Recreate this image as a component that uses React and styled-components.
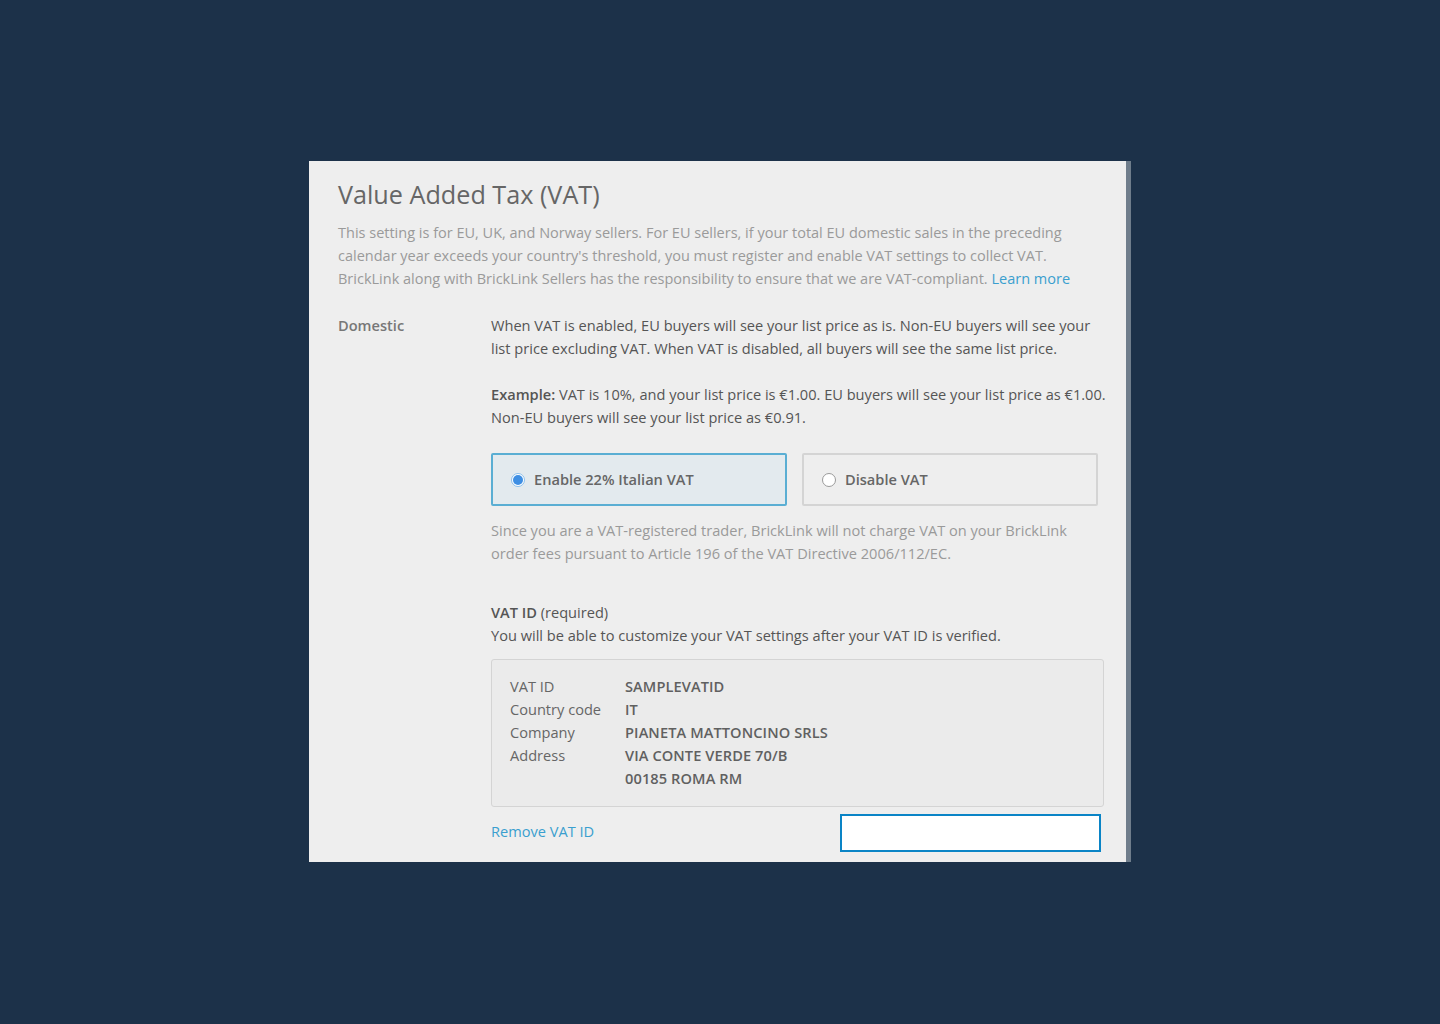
import React from 'react';
import styled, { createGlobalStyle } from 'styled-components';

const GlobalStyle = createGlobalStyle`
  html, body { margin: 0; padding: 0; }
  body {
    background: #1c3149;
    font-family: "Open Sans", Lato, sans-serif;
  }
`;

const Page = styled.div`
  width: 1440px;
  height: 1024px;
  display: flex;
  justify-content: center;
  padding-top: 161px;
  box-sizing: border-box;
`;

const Modal = styled.div`
  width: 822px;
  height: 701px;
  display: flex;
  overflow: hidden;
`;

const Panel = styled.div`
  flex: 1;
  min-width: 0;
  background: #eeeeee;
  padding: 16px 22px 0 29px;
  box-sizing: border-box;
`;

const Scrollbar = styled.div`
  width: 5px;
  flex-shrink: 0;
  background: #6f7d8b;
`;

const Title = styled.h1`
  margin: 0;
  font-size: 25.2px;
  font-weight: 400;
  color: #666666;
  line-height: 34px;
`;

const Intro = styled.p`
  margin: 10px 0 0;
  font-size: 14.5px;
  line-height: 23px;
  color: #9a9a9a;
  white-space: nowrap;
`;

const Link = styled.a`
  color: #3a9fcf;
  text-decoration: none;
  cursor: pointer;
`;

const Section = styled.div`
  display: grid;
  grid-template-columns: 153px 1fr;
  margin-top: 24px;
`;

const Label = styled.div`
  font-size: 14.6px;
  font-weight: 600;
  color: #777777;
  line-height: 23px;
`;

const Body = styled.div`
  font-size: 14.6px;
  line-height: 23px;
  color: #555555;
  white-space: nowrap;
`;

const Para = styled.p`
  margin: ${p => p.$top || 0}px 0 0;
  color: ${p => (p.$muted ? '#9a9a9a' : '#555555')};
`;

const Options = styled.div`
  display: grid;
  grid-template-columns: 296px 296px;
  gap: 15px;
  margin-top: 24px;
`;

const Option = styled.label`
  height: 53px;
  box-sizing: border-box;
  display: flex;
  align-items: center;
  gap: 9px;
  padding-left: 18px;
  border: 2px solid ${p => (p.$active ? '#5aaed3' : '#d4d4d4')};
  border-radius: 2px;
  background: ${p => (p.$active ? '#e3eaee' : '#eeeeee')};
  font-weight: 600;
  color: #666666;
  cursor: pointer;
`;

const Radio = styled.span`
  width: 14px;
  height: 14px;
  border-radius: 50%;
  box-sizing: border-box;
  border: 1px solid ${p => (p.$checked ? '#8cc0ec' : '#9a9a9a')};
  background: #fff;
  display: flex;
  align-items: center;
  justify-content: center;
  &::after {
    content: '';
    width: 10px;
    height: 10px;
    border-radius: 50%;
    background: ${p => (p.$checked ? '#3f8fe3' : 'transparent')};
  }
`;

const Strong = styled.b`
  font-weight: 600;
`;

const InfoBox = styled.div`
  margin-top: 12px;
  border: 1px solid #d4d4d4;
  border-radius: 3px;
  background: #ebebeb;
  padding: 15px 18px 16px;
  display: grid;
  grid-template-columns: 115px 1fr;
  width: 613px;
  box-sizing: border-box;
`;

const Key = styled.div`
  color: #666666;
`;

const Val = styled.div`
  font-weight: 600;
  color: #606060;
  letter-spacing: 0.1px;
`;

const Footer = styled.div`
  display: flex;
  justify-content: space-between;
  align-items: center;
  width: 612px;
  margin-top: 7px;
`;

const RemoveLink = styled(Link)`
  margin-top: -4px;
`;

const SaveButton = styled.button`
  width: 261px;
  height: 38px;
  margin-right: 2px;
  background: #ffffff;
  border: 2px solid #0a84c6;
  border-radius: 0;
`;

export default function App() {
  const rows = [
    ['VAT ID', 'SAMPLEVATID'],
    ['Country code', 'IT'],
    ['Company', 'PIANETA MATTONCINO SRLS'],
    ['Address', 'VIA CONTE VERDE 70/B'],
    ['', '00185 ROMA RM'],
  ];
  return (
    <>
      <GlobalStyle />
      <Page>
        <Modal>
          <Panel>
            <Title>Value Added Tax (VAT)</Title>
            <Intro>
              This setting is for EU, UK, and Norway sellers. For EU sellers, if your total EU domestic sales in the preceding
              <br />
              calendar year exceeds your country's threshold, you must register and enable VAT settings to collect VAT.
              <br />
              BrickLink along with BrickLink Sellers has the responsibility to ensure that we are VAT-compliant.{' '}
              <Link>Learn more</Link>
            </Intro>
            <Section>
              <Label>Domestic</Label>
              <Body>
                <Para>
                  When VAT is enabled, EU buyers will see your list price as is. Non-EU buyers will see your
                  <br />
                  list price excluding VAT. When VAT is disabled, all buyers will see the same list price.
                </Para>
                <Para $top={23}>
                  <Strong>Example:</Strong> VAT is 10%, and your list price is €1.00. EU buyers will see your list price as €1.00.
                  <br />
                  Non-EU buyers will see your list price as €0.91.
                </Para>
                <Options>
                  <Option $active>
                    <Radio $checked />
                    Enable 22% Italian VAT
                  </Option>
                  <Option>
                    <Radio />
                    Disable VAT
                  </Option>
                </Options>
                <Para $top={13} $muted>
                  Since you are a VAT-registered trader, BrickLink will not charge VAT on your BrickLink
                  <br />
                  order fees pursuant to Article 196 of the VAT Directive 2006/112/EC.
                </Para>
                <Para $top={36}>
                  <Strong>VAT ID</Strong> (required)
                  <br />
                  You will be able to customize your VAT settings after your VAT ID is verified.
                </Para>
                <InfoBox>
                  {rows.map(([k, v], i) => (
                    <React.Fragment key={i}>
                      <Key>{k}</Key>
                      <Val>{v}</Val>
                    </React.Fragment>
                  ))}
                </InfoBox>
                <Footer>
                  <RemoveLink>Remove VAT ID</RemoveLink>
                  <SaveButton />
                </Footer>
              </Body>
            </Section>
          </Panel>
          <Scrollbar />
        </Modal>
      </Page>
    </>
  );
}
